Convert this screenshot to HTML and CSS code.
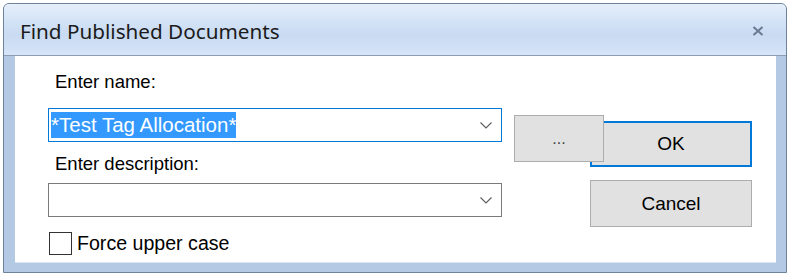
FILE: index.html
```html
<!DOCTYPE html>
<html lang="en">

<head>
    <meta charset="UTF-8">
    <title>Find Published Documents</title>
    <link rel="stylesheet" href="styles.css">
</head>

<body>
    <div class="window">
        <div class="titlebar">
            <span class="title">Find Published Documents</span>
            <svg class="close" width="12" height="10" viewBox="0 0 12 10">
                <path d="M1.5 1 L10.5 9 M10.5 1 L1.5 9" stroke="#6b7a8f" stroke-width="2" />
            </svg>
        </div>
        <div class="frame">
            <div class="client">
                <div class="fields">
                    <div class="label">Enter name:</div>
                    <div class="combo active">
                        <span class="selected">*Test Tag Allocation*</span>
                        <svg class="chevron" width="12" height="7" viewBox="0 0 12 7">
                            <path d="M0.5 0.5 L6 6 L11.5 0.5" fill="none" stroke="#606060" stroke-width="1.2" />
                        </svg>
                    </div>
                    <div class="label second">Enter description:</div>
                    <div class="combo">
                        <span class="selected"></span>
                        <svg class="chevron" width="12" height="7" viewBox="0 0 12 7">
                            <path d="M0.5 0.5 L6 6 L11.5 0.5" fill="none" stroke="#606060" stroke-width="1.2" />
                        </svg>
                    </div>
                    <label class="check">
                        <span class="box"></span>
                        Force upper case
                    </label>
                </div>
                <div class="buttons">
                    <button class="btn ok">OK</button>
                    <button class="btn cancel">Cancel</button>
                    <button class="btn browse">...</button>
                </div>
            </div>
        </div>
    </div>
</body>

</html>
```

FILE: styles.css
```css
body {
    margin: 0;
    background: #ffffff;
    font-family: "Liberation Sans", Arial, sans-serif;
}

.window {
    box-sizing: border-box;
    width: 784px;
    height: 270px;
    margin: 3px 0 0 3px;
    border: 1px solid #6f829c;
    border-radius: 6px 6px 0 0;
    background: #b3c9e4;
    overflow: hidden;
}

/* Title bar */

.titlebar {
    height: 51px;
    display: flex;
    align-items: center;
    justify-content: space-between;
    padding: 0 22px 0 16px;
    border-bottom: 1px solid #8d9db3;
    background: linear-gradient(#e6effa 0%, #d3e3f6 35%, #c9dbf2 60%, #d6e5f7 100%);
}

.title {
    font-family: "Noto Sans", "Open Sans", sans-serif;
    font-size: 20.7px;
    color: #1b1b1b;
    padding-top: 2px;
}

.close {
    margin-top: 2px;
}

/* Frame and client area */

.frame {
    padding: 0 10px 10px 11px;
}

.client {
    height: 206px;
    display: flex;
    padding: 16px 0 0 33px;
    box-sizing: border-box;
    background: #ffffff;
    box-shadow: 0 1px 0 #d9e5f3;
}

.fields {
    width: 454px;
    display: flex;
    flex-direction: column;
}

.label {
    font-size: 18.5px;
    line-height: 20px;
    color: #000000;
    padding-left: 7px;
}

.label.second {
    margin-top: 12px;
}

.combo {
    box-sizing: border-box;
    height: 34px;
    margin-top: 16px;
    border: 1px solid #7a7a7a;
    display: flex;
    align-items: center;
    justify-content: space-between;
    padding: 0 9px 0 2px;
}

.label.second + .combo {
    margin-top: 9px;
}

.combo.active {
    border-color: #0078d7;
}

.selected {
    font-size: 20.5px;
    line-height: 26px;
    color: #ffffff;
    background: #3399ff;
}

.chevron {
    margin-top: 1px;
}

.check {
    display: flex;
    align-items: center;
    gap: 5px;
    margin-top: 15px;
    padding-left: 1px;
    font-size: 19.6px;
    color: #000000;
}

.box {
    box-sizing: border-box;
    width: 23px;
    height: 23px;
    border: 1px solid #333333;
    background: #ffffff;
}

/* Buttons */

.buttons {
    position: relative;
    display: flex;
    flex-direction: column;
    gap: 13px;
    margin-left: 88px;
    padding-top: 49px;
}

.btn {
    box-sizing: border-box;
    width: 162px;
    height: 46px;
    border: 1px solid #adadad;
    background: #e1e1e1;
    font-family: "Liberation Sans", Arial, sans-serif;
    font-size: 19px;
    color: #000000;
    padding: 0;
}

.btn.ok {
    border: 2px solid #0078d7;
}

.btn.cancel {
    height: 47px;
}

.btn.browse {
    position: absolute;
    left: -76px;
    top: 43px;
    width: 90px;
    height: 47px;
    color: #444444;
    font-size: 16px;
}
```
